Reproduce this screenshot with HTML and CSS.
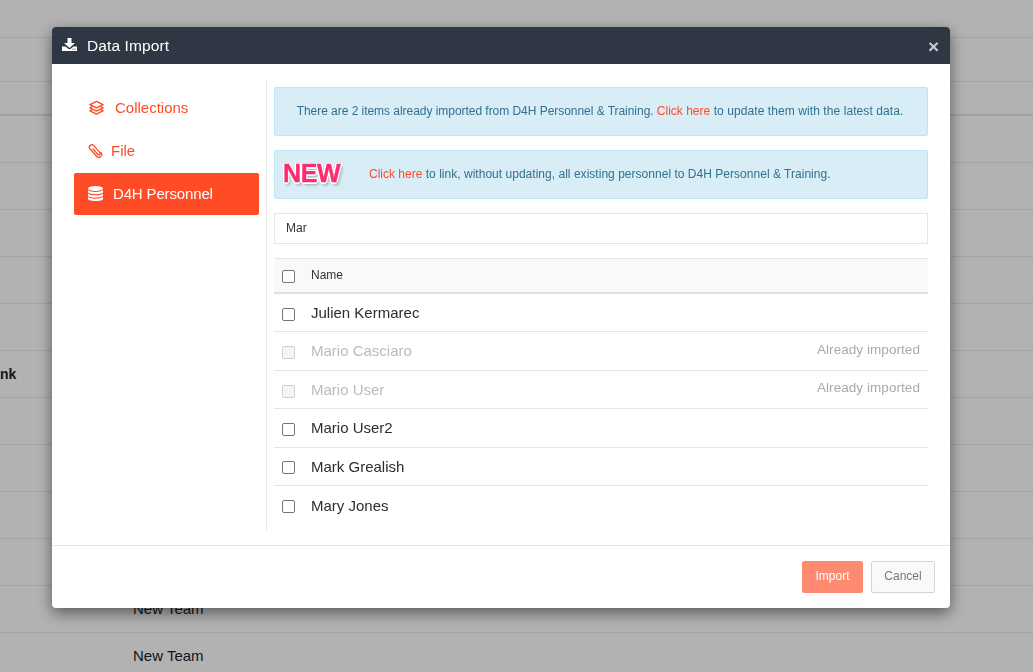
FILE: index.html
```html
<!DOCTYPE html>
<html lang="en">
<head>
<meta charset="utf-8">
<title>Data Import</title>
<link rel="stylesheet" href="styles.css">
</head>
<body>
<div class="page">
  <div class="bg-row r38"></div>
  <div class="bg-row r44"></div>
  <div class="bg-row r34 dark"></div>
  <div class="bg-row r47"></div>
  <div class="bg-row r47"></div>
  <div class="bg-row r47"></div>
  <div class="bg-row r47"></div>
  <div class="bg-row r47"></div>
  <div class="bg-row r47"><span class="bold-text">nk</span></div>
  <div class="bg-row r47"></div>
  <div class="bg-row r47"></div>
  <div class="bg-row r47"></div>
  <div class="bg-row r47"></div>
  <div class="bg-row r47"><span class="team-text">New Team</span></div>
  <div class="bg-row r47"><span class="team-text">New Team</span></div>
</div>
<div class="backdrop"></div>
<div class="modal">
  <header class="modal-head">
    <svg class="head-icon" viewBox="0 0 15 13"><path d="M5.500 0h4v5H13L7.500 10 2 5h3.500z" fill="#fff"/><path d="M0 8.500h3.500L6.500 11h2l3-2.500H15V13H0zM10.500 10.700v1h1v-1zM12.500 10.700v1h1v-1z" fill="#fff" fill-rule="evenodd"/></svg>
    <span class="modal-title">Data Import</span>
    <span class="close">×</span>
  </header>
  <div class="modal-body">
    <nav class="side">
      <a class="nav-item nav-collections">
        <svg class="nav-icon" viewBox="0 0 16 15" fill="none" stroke="currentColor" stroke-width="1.500" stroke-linejoin="round"><path d="M8 1 15 4.500 8 8 1 4.500z"/><path d="M3.500 6.500 1 7.800 8 11.300l7-3.500-2.500-1.300"/><path d="M3.500 9.800 1 11 8 14.500 15 11l-2.500-1.200"/></svg>
        <span>Collections</span>
      </a>
      <a class="nav-item nav-file">
        <svg class="nav-icon" viewBox="0 0 16 16" fill="none" stroke="currentColor" stroke-width="1.400" stroke-linecap="round" stroke-linejoin="round"><path d="M5.400 6.400 10.300 12a1.500 1.500 0 0 0 2.300-2L6 2.600A2.700 2.700 0 0 0 2 6.200l7.200 8a3 3 0 0 0 4.600-4"/></svg>
        <span>File</span>
      </a>
      <a class="nav-item active">
        <svg class="nav-icon" viewBox="0 0 15 15" fill="currentColor"><ellipse cx="7.500" cy="2.500" rx="7.500" ry="2.500"/><path d="M0 4c1 1.300 4 1.900 7.500 1.900S14 5.300 15 4v2.100c0 1.200-3.300 2.100-7.500 2.100S0 7.300 0 6.100z"/><path d="M0 7.400c1 1.300 4 1.900 7.500 1.900s6.500-.6 7.500-1.900v2.100c0 1.200-3.300 2.100-7.500 2.100S0 10.700 0 9.500z"/><path d="M0 10.800c1 1.300 4 1.900 7.500 1.900s6.500-.6 7.500-1.900v1.900c0 1.300-3.300 2.300-7.500 2.300S0 14 0 12.700z"/></svg>
        <span>D4H Personnel</span>
      </a>
    </nav>
    <main class="content">
      <div class="notice notice-first"><span class="tight">There are 2 items already imported from D4H Personnel &amp; Training. </span><a class="link">Click here</a><span class="loose"> to update them with the latest data.</span></div>
      <div class="notice notice-new">
        <span class="new-badge">NEW</span>
        <span><a class="link">Click here</a> to link, without updating, all existing personnel to D4H Personnel &amp; Training.</span>
      </div>
      <div class="search">Mar</div>
      <div class="table">
        <div class="row row-head">
          <span class="check"></span>
          <span class="th-name">Name</span>
        </div>
        <div class="row"><span class="check"></span><span class="name">Julien Kermarec</span></div>
        <div class="row muted"><span class="check check-off"></span><span class="name">Mario Casciaro</span><span class="status">Already imported</span></div>
        <div class="row muted"><span class="check check-off"></span><span class="name">Mario User</span><span class="status">Already imported</span></div>
        <div class="row"><span class="check"></span><span class="name">Mario User2</span></div>
        <div class="row"><span class="check"></span><span class="name">Mark Grealish</span></div>
        <div class="row no-line"><span class="check"></span><span class="name">Mary Jones</span></div>
      </div>
    </main>
  </div>
  <footer class="modal-foot">
    <button class="btn btn-import">Import</button>
    <button class="btn btn-cancel">Cancel</button>
  </footer>
</div>
</body>
</html>
```
FILE: styles.css
```css
* { box-sizing: border-box; }
html, body { margin: 0; height: 100%; overflow: hidden; }
body { font-family: "Liberation Sans", Arial, sans-serif; color: #1d2129; background: #fff; }

.page { height: 672px; overflow: hidden; }
.bg-row { border-bottom: 1px solid #eaeaea; position: relative; }
.bg-row.dark { border-bottom: 2px solid #e6e6e6; }
.r38 { height: 38px; }
.r44 { height: 44px; }
.r34 { height: 34px; }
.r47 { height: 47px; }
.bold-text { position: absolute; left: 0; top: 15px; font-weight: 700; font-size: 14px; }
.team-text { position: absolute; left: 133px; top: 14px; font-size: 15px; }

.backdrop { position: fixed; inset: 0; background: rgba(0, 0, 0, 0.3); }

.modal {
  position: fixed; left: 52px; top: 27px; width: 898px; height: 581px;
  background: #fff; border-radius: 4px; overflow: hidden;
  display: flex; flex-direction: column;
  box-shadow: 0 5px 15px rgba(0, 0, 0, 0.5);
}

.modal-head {
  height: 37px; background: #2f3744; color: #fff;
  display: flex; align-items: center; padding: 0 11px 0 10px;
  flex: none;
}
.head-icon { width: 15px; height: 13px; margin-right: 10px; margin-top: -3px; }
.modal-title { font-size: 15.500px; letter-spacing: 0.1px; flex: 1; }
.close { font-size: 19px; font-weight: 700; color: #c9cbce; line-height: 1; margin-top: 1px; }

.modal-body { flex: 1; display: flex; padding: 16px 22px 15px 22px; min-height: 0; }
.side { width: 193px; border-right: 1px solid #e5e5e5; flex: none; padding-top: 7px; }
.nav-item {
  display: flex; align-items: center; height: 43px; color: #ff4b26;
  font-size: 15px; width: 185px; border-radius: 2px; padding-bottom: 2px;
}
.nav-icon { width: 15px; height: 15px; flex: none; }
.nav-collections { padding-left: 15px; }
.nav-collections .nav-icon { margin-right: 11px; }
.nav-file { padding-left: 14px; }
.nav-file .nav-icon { margin-right: 8px; }
.active { background: #ff4b26; color: #fff; padding-left: 14px; height: 42px; letter-spacing: -0.15px; padding-bottom: 1px; }
.active .nav-icon { margin-right: 10px; }

.content { flex: 1; padding-left: 7px; padding-top: 7px; min-width: 0; }
.notice {
  height: 49px; background: #d9edf7; border: 1px solid #bce8f1; border-radius: 2px;
  color: #31708f; font-size: 12px; letter-spacing: 0.025px; display: flex; align-items: center; justify-content: center;
  margin-bottom: 14px; white-space: pre-wrap; padding-bottom: 2px;
}
.notice-first { padding-right: 2px; }
.tight { letter-spacing: -0.04px; }
.loose { letter-spacing: 0.08px; }
.notice-new { justify-content: flex-start; padding-left: 8px; }
.link { color: #ff4b26; letter-spacing: 0; }
.new-badge {
  font-size: 25px; font-weight: 700; color: #fb2d6e; width: 86px; letter-spacing: -0.4px;
  -webkit-text-stroke: 0.4px #fb2d6e;
  text-shadow: -1.500px 0 0 #fff, 1.500px 0 0 #fff, 0 -1.500px 0 #fff, 0 1.500px 0 #fff, -1px -1px 0 #fff, 1px -1px 0 #fff, -1px 1px 0 #fff, 1px 1px 0 #fff, 2px 3px 3px rgba(0, 0, 0, 0.3);
}
.search {
  height: 31px; border: 1px solid #e5e5e5; font-size: 12px; color: #333;
  display: flex; align-items: center; padding: 0 0 2px 11px; margin-bottom: 14px;
}
.row {
  display: flex; align-items: center; height: 38.500px; border-bottom: 1px solid #e5e5e5; padding-left: 8px; padding-right: 8px;
}
.row-head {
  height: 36px; background: #f9f9f9; border-top: 1px solid #e5e5e5; border-bottom: 2px solid #e0e0e0;
}
.row-head + .row { height: 38px; }
.no-line { border-bottom: 0; }
.check {
  width: 13px; height: 13px; border: 1px solid #767676; border-radius: 2px; background: #fff; flex: none; margin-right: 16px; margin-top: 3px;
}
.row-head .check { margin-top: 2px; }
.muted .check { margin-top: 4px; }
.check-off { border-color: #d0d0d0; background: #f5f5f5; }
.th-name { font-size: 12px; color: #333; margin-top: -2px; }
.name { font-size: 15px; color: #2a2d33; flex: 1; }
.muted .name { color: #bbb; }
.status { font-size: 13.500px; letter-spacing: 0.06px; color: #aaa; margin-top: -3px; }

.modal-foot {
  height: 63px; border-top: 1px solid #e5e5e5; flex: none; display: flex; justify-content: flex-end; align-items: flex-start; gap: 8px; padding: 15px 15px 0 0;
}
.btn { font-family: inherit; font-size: 12px; height: 32px; border-radius: 2px; padding: 0 0 3px; }
.btn-import { width: 61px; background: #ff8a72; color: #fff; border: 1px solid #ff8a72; }
.btn-cancel { width: 64px; background: #f9f9f9; color: #777; border: 1px solid #d4d4d4; }
```
